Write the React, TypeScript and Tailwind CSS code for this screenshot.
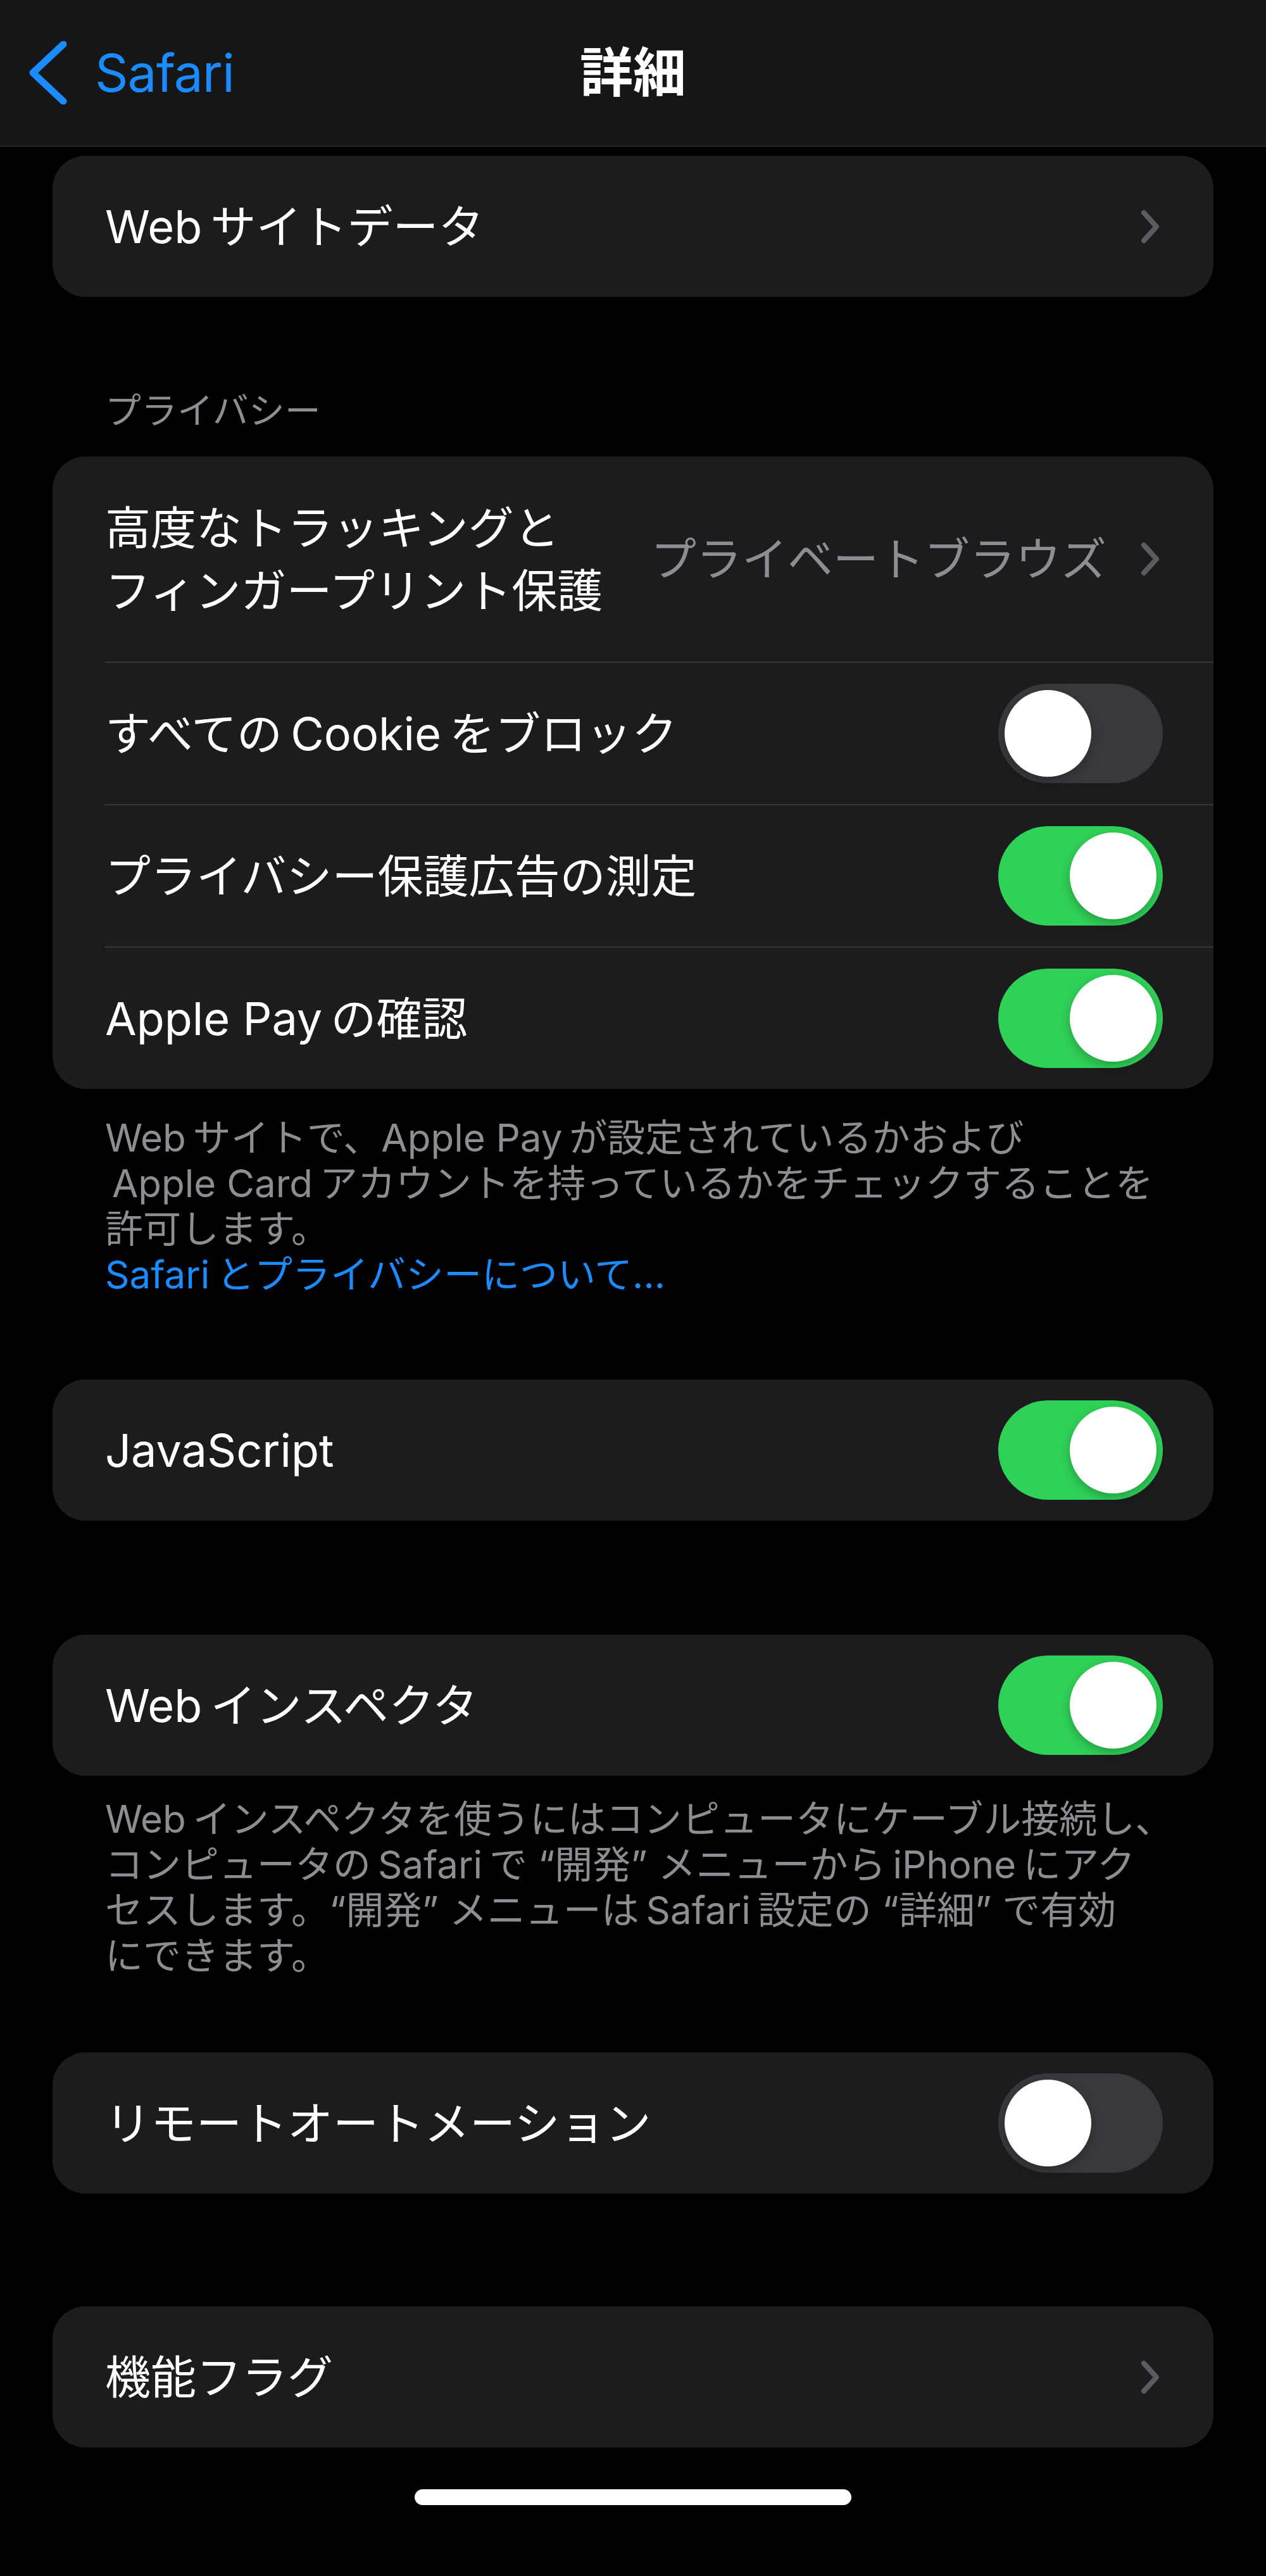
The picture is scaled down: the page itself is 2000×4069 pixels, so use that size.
import { ReactNode } from "react";

const FONT = "font-[Inter,'Noto_Sans_CJK_JP',sans-serif]";

function Chevron() {
  return (
    <svg width="30" height="54" viewBox="0 0 30 54" className="mr-[5px] shrink-0">
      <path d="M5 5 L25 27 L5 49" fill="none" stroke="#5c5c60" strokeWidth="8" strokeLinecap="round" strokeLinejoin="round" />
    </svg>
  );
}

function Toggle({ on }: { on: boolean }) {
  return (
    <div
      className={`w-[260px] h-[157px] rounded-full p-[10px] flex shrink-0 ${
        on ? "bg-[#30d158] justify-end" : "bg-[#39393d] justify-start"
      }`}
    >
      <div className="w-[137px] h-[137px] rounded-full bg-white shadow-[0_6px_16px_rgba(0,0,0,0.25)]" />
    </div>
  );
}

function Row({ children, right, tall }: { children: ReactNode; right: ReactNode; tall?: boolean }) {
  return (
    <div className={`flex items-center justify-between pl-[83px] pr-[80px] ${tall ? "h-[324px]" : "h-[223px]"}`}>
      <div className="text-[72px] text-white">{children}</div>
      {right}
    </div>
  );
}

function Divider() {
  return <div className="ml-[83px] h-[2px] bg-[#38383a]" />;
}

function Card({ children }: { children: ReactNode }) {
  return <div className="rounded-[52px] bg-[#1c1c1e] overflow-hidden">{children}</div>;
}

export default function App() {
  return (
    <div className={`min-h-[4069px] bg-black ${FONT}`}>
      {/* ── Nav bar ─────────────────────────────────────────── */}
      <div className="h-[232px] bg-[#161616] border-b-2 border-[#242424] grid grid-cols-[1fr_auto_1fr] items-center">
        <div className="flex items-center pl-[44px] gap-[44px] text-[#1a8cff]">
          <svg width="62" height="100" viewBox="0 0 62 100">
            <path d="M56 5 L8 50 L56 95" fill="none" stroke="#1a8cff" strokeWidth="11" strokeLinecap="round" strokeLinejoin="round" />
          </svg>
          <span className="text-[82px] tracking-[-1px]">Safari</span>
        </div>
        <div className="text-[84px] font-semibold text-white">詳細</div>
        <div />
      </div>

      <div className="px-[83px]">
        {/* Website data */}
        <div className="mt-[14px]">
          <Card>
            <Row right={<Chevron />}>{"Web\u2009サイトデータ"}</Row>
          </Card>
        </div>

        {/* Privacy */}
        <div className="mt-[144px] mb-[36px] pl-[83px] text-[57px] leading-[72px] text-[#8d8d93]">プライバシー</div>
        <Card>
          <Row
            tall
            right={
              <div className="flex items-center gap-[54px]">
                <span className="text-[72px] text-[#8d8d93]">プライベートブラウズ</span>
                <Chevron />
              </div>
            }
          >
            <div className="leading-[99px]">
              高度なトラッキングと
              <br />
              フィンガープリント保護
            </div>
          </Row>
          <Divider />
          <Row right={<Toggle on={false} />}>{"すべての\u2009Cookie\u2009をブロック"}</Row>
          <Divider />
          <Row right={<Toggle on />}>プライバシー保護広告の測定</Row>
          <Divider />
          <Row right={<Toggle on />}>{"Apple Pay\u2009の確認"}</Row>
        </Card>
        <div className="mt-[41px] pl-[83px] text-[60px] leading-[72px] text-[#8d8d93]">
          {"Web\u2009サイトで、Apple Pay\u2009が設定されているかおよび"}
          <br />
          {"\u2009Apple Card\u2009アカウントを持っているかをチェックすることを"}
          <br />
          許可します。
          <br />
          <span className="text-[#1a8cff]">{"Safari\u2009とプライバシーについて..."}</span>
        </div>

        {/* JavaScript */}
        <div className="mt-[130px]">
          <Card>
            <Row right={<Toggle on />}>JavaScript</Row>
          </Card>
        </div>

        {/* Web inspector */}
        <div className="mt-[180px]">
          <Card>
            <Row right={<Toggle on />}>{"Web\u2009インスペクタ"}</Row>
          </Card>
        </div>
        <div className="mt-[32px] pl-[83px] text-[60px] leading-[72px] text-[#8d8d93]">
          {"Web\u2009インスペクタを使うにはコンピュータにケーブル接続し、"}
          <br />
          {"コンピュータの\u2009Safari\u2009で “開発” メニューから\u2009iPhone\u2009にアク"}
          <br />
          {"セスします。“開発” メニューは\u2009Safari\u2009設定の “詳細” で有効"}
          <br />
          にできます。
        </div>

        {/* Remote automation */}
        <div className="mt-[117px]">
          <Card>
            <Row right={<Toggle on={false} />}>リモートオートメーション</Row>
          </Card>
        </div>

        {/* Feature flags */}
        <div className="mt-[178px]">
          <Card>
            <Row right={<Chevron />}>機能フラグ</Row>
          </Card>
        </div>
      </div>

      {/* Home indicator */}
      <div className="mt-[66px] flex justify-center">
        <div className="w-[690px] h-[25px] rounded-full bg-white" />
      </div>
    </div>
  );
}
